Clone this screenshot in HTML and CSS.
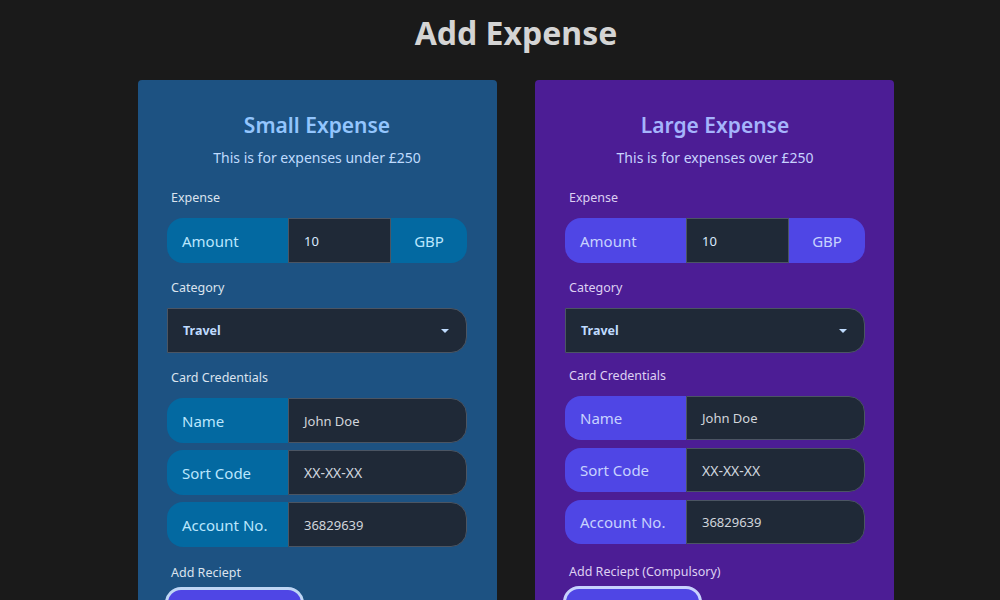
FILE: index.html
```html
<!DOCTYPE html>
<html lang="en">
<head>
<meta charset="utf-8">
<title>Add Expense</title>
<link rel="stylesheet" href="styles.css">
</head>
<body>
<div class="page">
  <h1 class="page-title">Add Expense</h1>
  <div class="cards">
    <form class="card card-small">
      <h2 class="card-title">Small Expense</h2>
      <p class="card-sub">This is for expenses under £250</p>

      <div class="label">Expense</div>
      <div class="group">
        <span class="addon addon-left">Amount</span>
        <span class="field field-mid amount">10</span>
        <span class="addon addon-right">GBP</span>
      </div>

      <div class="label">Category</div>
      <div class="select"><span>Travel</span><span class="caret"></span></div>

      <div class="label">Card Credentials</div>
      <div class="stack">
        <div class="group">
          <span class="addon addon-left">Name</span>
          <span class="field">John Doe</span>
        </div>
        <div class="group">
          <span class="addon addon-left">Sort Code</span>
          <span class="field field-ph">XX-XX-XX</span>
        </div>
        <div class="group">
          <span class="addon addon-left">Account No.</span>
          <span class="field">36829639</span>
        </div>
      </div>

      <div class="label label-receipt">Add Reciept</div>
      <div class="upload"></div>
    </form>

    <form class="card card-large">
      <h2 class="card-title">Large Expense</h2>
      <p class="card-sub">This is for expenses over £250</p>

      <div class="label">Expense</div>
      <div class="group">
        <span class="addon addon-left">Amount</span>
        <span class="field field-mid amount">10</span>
        <span class="addon addon-right">GBP</span>
      </div>

      <div class="label">Category</div>
      <div class="select"><span>Travel</span><span class="caret"></span></div>

      <div class="label label-cred">Card Credentials</div>
      <div class="stack stack-tight">
        <div class="group">
          <span class="addon addon-left">Name</span>
          <span class="field">John Doe</span>
        </div>
        <div class="group">
          <span class="addon addon-left">Sort Code</span>
          <span class="field field-ph">XX-XX-XX</span>
        </div>
        <div class="group">
          <span class="addon addon-left">Account No.</span>
          <span class="field">36829639</span>
        </div>
      </div>

      <div class="label label-receipt2">Add Reciept (Compulsory)</div>
      <div class="upload"></div>
    </form>
  </div>
</div>
</body>
</html>
```

FILE: styles.css
```css
* { box-sizing: border-box; }

html, body {
  margin: 0;
  height: 100%;
  overflow: hidden;
  background: #1a1a1a;
  font-family: "Noto Sans", "Open Sans", "Liberation Sans", sans-serif;
}

.page {
  padding-left: 32px;
}

.page-title {
  margin: 0;
  padding-top: 11px;
  height: 80px;
  text-align: center;
  font-size: 32px;
  line-height: 44px;
  font-weight: 700;
  color: #d4d4d4;
}

.cards {
  display: flex;
  justify-content: center;
  gap: 38px;
}

.card {
  width: 359px;
  height: 560px;
  padding: 32px 30px 0 29px;
  border-radius: 4px;
  margin: 0;
}

.card-small { background: #1d5282; }
.card-large { background: #4c1d95; padding: 32px 29px 0 30px; }

.card-title {
  margin: 0;
  text-align: center;
  font-size: 21px;
  line-height: 26px;
  font-weight: 600;
  color: #93c5fd;
}
.card-large .card-title { color: #a5b4fc; }

.card-sub {
  margin: 10px 0 0;
  text-align: center;
  font-size: 14px;
  line-height: 20px;
  color: #bfdbfe;
}
.card-large .card-sub { color: #c7d2fe; }

.label {
  margin-top: 16px;
  padding-left: 4px;
  font-size: 12.5px;
  line-height: 18px;
  color: #dbe3ee;
}
.card-sub + .label { margin-top: 21px; }
.card-large .label { color: #ddd0f2; }
.label-cred { margin-top: 14px; }
.label-receipt { margin-top: 17px; }
.label-receipt2 { margin-top: 19px; }

.group {
  display: flex;
  height: 45px;
  margin-top: 11px;
  border-radius: 16px;
  overflow: hidden;
}
.stack { margin-top: 11px; display: flex; flex-direction: column; gap: 7px; }
.stack .group { margin-top: 0; height: 45px; }
.stack-tight { gap: 8px; }
.stack-tight .group { height: 44px; }

.addon {
  display: flex;
  align-items: center;
  font-size: 15px;
  background: #0369a1;
  color: #bae6fd;
}
.card-large .addon { background: #4f46e5; color: #c7d2fe; }

.addon-left {
  width: 121px;
  flex: none;
  padding-left: 15px;
}
.addon-right {
  width: 76px;
  flex: none;
  justify-content: center;
}

.field {
  flex: 1;
  display: flex;
  align-items: center;
  padding-left: 15px;
  background: #1f2937;
  border: 1px solid #4b5563;
  border-radius: 0 16px 16px 0;
  font-size: 13px;
  color: #d1d5db;
}
.field-mid { border-radius: 0; }
.amount { color: #dbeafe; }
.field-ph { font-size: 14px; color: #d0d6df; }

.select {
  margin-top: 11px;
  height: 45px;
  display: flex;
  align-items: center;
  justify-content: space-between;
  padding: 0 15px 0 15px;
  background: #1f2937;
  border: 1px solid #4b5563;
  border-radius: 0 16px 16px 0;
  font-size: 12.5px;
  font-weight: 700;
  color: #bfdbfe;
}
.caret {
  width: 0;
  height: 0;
  border-left: 4px solid transparent;
  border-right: 4px solid transparent;
  border-top: 4px solid #bfdbfe;
  margin-right: 2px;
}

.upload {
  margin-top: 5px;
  margin-left: -2px;
  width: 139px;
  height: 50px;
  border: 3px solid #bfd6f5;
  border-radius: 16px;
  background: #4f46e5;
}
.card-large .upload { border-color: #c7d2fe; }
```
